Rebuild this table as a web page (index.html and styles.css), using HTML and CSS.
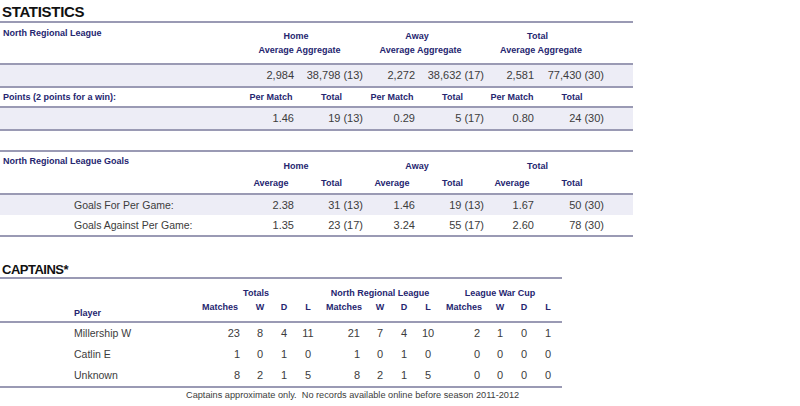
FILE: index.html
```html
<!DOCTYPE html>
<html lang="en">
<head>
<meta charset="utf-8">
<title>Statistics</title>
<link rel="stylesheet" href="styles.css">
</head>
<body>
<div class="page">
  <h2 class="title title-lg">STATISTICS</h2>

  <div class="stats">
    <div class="grid hdr hdr-att">
      <div class="lbl hd span2">North Regional League</div>
      <div class="hd grp g-home">Home</div>
      <div class="hd grp2 g-home">Average Aggregate</div>
      <div class="hd grp g-away">Away</div>
      <div class="hd grp2 g-away">Average Aggregate</div>
      <div class="hd grp g-total">Total</div>
      <div class="hd grp2 g-total">Average Aggregate</div>
    </div>
    <div class="grid band row21">
      <div></div>
      <div class="num">2,984</div>
      <div class="num">38,798 (13)</div>
      <div class="num">2,272</div>
      <div class="num">38,632 (17)</div>
      <div class="num">2,581</div>
      <div class="num">77,430 (30)</div>
      <div></div>
    </div>
    <div class="grid row18 ruled">
      <div class="lbl hd">Points (2 points for a win):</div>
      <div class="hd ctr">Per Match</div>
      <div class="hd ctr">Total</div>
      <div class="hd ctr">Per Match</div>
      <div class="hd ctr">Total</div>
      <div class="hd ctr">Per Match</div>
      <div class="hd ctr">Total</div>
      <div></div>
    </div>
    <div class="grid band row21">
      <div></div>
      <div class="num">1.46</div>
      <div class="num">19 (13)</div>
      <div class="num">0.29</div>
      <div class="num">5 (17)</div>
      <div class="num">0.80</div>
      <div class="num">24 (30)</div>
      <div></div>
    </div>
  </div>

  <div class="stats goals">
    <div class="grid hdr hdr-goals">
      <div class="lbl hd span2">North Regional League Goals</div>
      <div class="hd grp g-home">Home</div>
      <div class="hd sub c2">Average</div>
      <div class="hd sub c3">Total</div>
      <div class="hd grp g-away">Away</div>
      <div class="hd sub c4">Average</div>
      <div class="hd sub c5">Total</div>
      <div class="hd grp g-total">Total</div>
      <div class="hd sub c6">Average</div>
      <div class="hd sub c7">Total</div>
    </div>
    <div class="grid band row20 plain">
      <div class="name">Goals For Per Game:</div>
      <div class="num">2.38</div>
      <div class="num">31 (13)</div>
      <div class="num">1.46</div>
      <div class="num">19 (13)</div>
      <div class="num">1.67</div>
      <div class="num">50 (30)</div>
      <div></div>
    </div>
    <div class="grid row20 ruled">
      <div class="name">Goals Against Per Game:</div>
      <div class="num">1.35</div>
      <div class="num">23 (17)</div>
      <div class="num">3.24</div>
      <div class="num">55 (17)</div>
      <div class="num">2.60</div>
      <div class="num">78 (30)</div>
      <div></div>
    </div>
  </div>

  <h2 class="title title-sm">CAPTAINS*</h2>

  <div class="capt">
    <div class="cgrid chdr">
      <div class="hd player">Player</div>
      <div class="hd cgrp cg1">Totals</div>
      <div class="hd cgrp cg2">North Regional League</div>
      <div class="hd cgrp cg3">League War Cup</div>
      <div class="hd csub">Matches</div>
      <div class="hd csub">W</div>
      <div class="hd csub">D</div>
      <div class="hd csub">L</div>
      <div class="hd csub">Matches</div>
      <div class="hd csub">W</div>
      <div class="hd csub">D</div>
      <div class="hd csub">L</div>
      <div class="hd csub">Matches</div>
      <div class="hd csub">W</div>
      <div class="hd csub">D</div>
      <div class="hd csub">L</div>
    </div>
    <div class="cbody">
      <div class="cgrid crow">
        <div class="name">Millership W</div>
        <div class="m">23</div><div class="c">8</div><div class="c">4</div><div class="c">11</div>
        <div class="m">21</div><div class="c">7</div><div class="c">4</div><div class="c">10</div>
        <div class="m">2</div><div class="c">1</div><div class="c">0</div><div class="c">1</div>
        <div></div>
      </div>
      <div class="cgrid crow">
        <div class="name">Catlin E</div>
        <div class="m">1</div><div class="c">0</div><div class="c">1</div><div class="c">0</div>
        <div class="m">1</div><div class="c">0</div><div class="c">1</div><div class="c">0</div>
        <div class="m">0</div><div class="c">0</div><div class="c">0</div><div class="c">0</div>
        <div></div>
      </div>
      <div class="cgrid crow">
        <div class="name">Unknown</div>
        <div class="m">8</div><div class="c">2</div><div class="c">1</div><div class="c">5</div>
        <div class="m">8</div><div class="c">2</div><div class="c">1</div><div class="c">5</div>
        <div class="m">0</div><div class="c">0</div><div class="c">0</div><div class="c">0</div>
        <div></div>
      </div>
    </div>
  </div>
  <p class="note">Captains approximate only.&nbsp; No records available online before season 2011-2012</p>
</div>
</body>
</html>
```
FILE: styles.css
```css
html, body {
  margin: 0;
  padding: 0;
  background: #ffffff;
}

body {
  font-family: "Liberation Sans", Arial, sans-serif;
  color: #3c3c3c;
}

.page {
  width: 800px;
}

.title {
  margin: 0;
  padding-left: 2px;
  color: #111111;
  font-weight: bold;
}

.title-lg {
  margin-top: 3px;
  font-size: 15px;
  line-height: 18px;
  height: 18px;
  letter-spacing: -0.3px;
}

.title-sm {
  margin-top: 25px;
  font-size: 13px;
  line-height: 15px;
  height: 15px;
  letter-spacing: -0.5px;
}

/* ---------- statistics tables ---------- */

.stats {
  width: 633px;
  border-top: 2px solid #9a9ab4;
}

.goals {
  margin-top: 19px;
}

.grid {
  display: grid;
  grid-template-columns: 245px 52px 69px 52px 69px 50px 70px 26px;
  box-sizing: border-box;
}

.hdr {
  border-bottom: 2px solid #9a9ab4;
}

.hdr-att {
  grid-template-rows: 21px 19px;
  height: 42px;
}

.hdr-goals {
  grid-template-rows: 22px 19px;
  height: 43px;
}

.hd {
  color: #25256f;
  font-weight: bold;
  font-size: 9px;
  line-height: 11px;
  white-space: nowrap;
}

.lbl {
  padding-left: 3px;
}

.span2 {
  grid-row: 1 / 3;
  grid-column: 1;
  align-self: start;
  padding-top: 5px;
}

.hdr-goals .span2 {
  padding-top: 4px;
}

.grp {
  grid-row: 1;
  align-self: end;
  padding-bottom: 2px;
  padding-right: 19px;
  text-align: center;
}

.grp2 {
  grid-row: 2;
  align-self: start;
  padding-top: 1px;
  padding-right: 12px;
  text-align: center;
}

.g-home { grid-column: 2 / 4; }
.g-away { grid-column: 4 / 6; }
.g-total { grid-column: 6 / 8; }

.sub {
  grid-row: 2;
  align-self: start;
  padding-top: 4px;
  text-align: center;
}

.c2 { grid-column: 2; }
.c3 { grid-column: 3; }
.c4 { grid-column: 4; }
.c5 { grid-column: 5; }
.c6 { grid-column: 6; }
.c7 { grid-column: 7; }

.band {
  background: #ededf6;
}

.row21 {
  height: 23px;
  border-bottom: 2px solid #9a9ab4;
  align-items: center;
}

.row18 {
  height: 20px;
  align-items: center;
}

.row20 {
  height: 20px;
  align-items: center;
}

.ruled {
  border-bottom: 2px solid #9a9ab4;
}

.goals .ruled {
  height: 22px;
}

.ctr {
  text-align: center;
}

.num {
  font-size: 11px;
  line-height: 13px;
  text-align: right;
  padding-right: 3px;
  white-space: nowrap;
}

.name {
  font-size: 10.5px;
  line-height: 13px;
  padding-left: 74px;
  white-space: nowrap;
}

/* ---------- captains ---------- */

.capt {
  width: 562px;
  border-top: 2px solid #9a9ab4;
}

.cgrid {
  display: grid;
  grid-template-columns: 192px 56px 24px 24px 24px 48px 24px 24px 24px 48px 24px 24px 24px 2px;
  box-sizing: border-box;
}

.chdr {
  grid-template-rows: 22px 20px;
  height: 44px;
  border-bottom: 2px solid #9a9ab4;
}

.player {
  grid-column: 1;
  grid-row: 1 / 3;
  align-self: end;
  padding-left: 74px;
  padding-bottom: 2px;
}

.cgrp {
  grid-row: 1;
  align-self: end;
  padding-bottom: 2px;
  text-align: center;
}

.cg1 { grid-column: 2 / 6; }
.cg2 { grid-column: 6 / 10; }
.cg3 { grid-column: 10 / 14; }

.csub {
  grid-row: 2;
  align-self: start;
  padding-top: 1px;
  text-align: center;
}

.cbody {
  border-bottom: 2px solid #9a9ab4;
}

.crow {
  height: 21px;
  align-items: center;
}

.crow .m {
  font-size: 11px;
  line-height: 13px;
  text-align: right;
  padding-right: 8px;
}

.crow .c {
  font-size: 11px;
  line-height: 13px;
  text-align: center;
}

.note {
  margin: 1px 0 0 186px;
  font-size: 9.2px;
  line-height: 12px;
  color: #3c3c3c;
  white-space: nowrap;
}
```
